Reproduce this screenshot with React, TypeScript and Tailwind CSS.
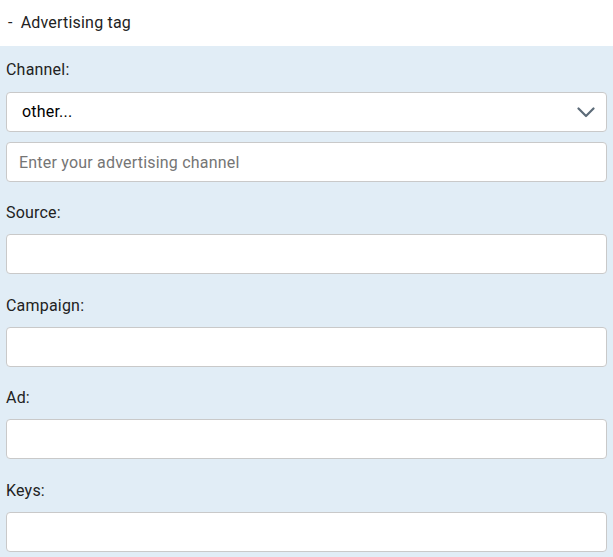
const fields = ["Source:", "Campaign:", "Ad:", "Keys:"];

function Field({ label, first }: { label: string; first?: boolean }) {
  return (
    <div className={first ? "mt-[20px]" : "mt-[20.7px]"}>
      <div className="mb-[10px] h-[22px] leading-[22px]">{label}</div>
      <input
        type="text"
        className="block h-10 w-full rounded border border-[#c9c9c9] bg-white px-3 outline-none"
      />
    </div>
  );
}

export default function App() {
  return (
    <div className="w-[613px] font-['Roboto',sans-serif] text-[16px] tracking-[0.2px] text-[#222]">
      <div className="flex h-[46px] items-center bg-white px-2">
        <span className="mr-2">-</span>
        <span>Advertising tag</span>
      </div>
      <div className="bg-[#e1edf6] px-[6px] pt-[13px] pb-[6px]">
        <div className="h-[22px] leading-[22px]">Channel:</div>
        <div className="mt-[11px] flex h-10 items-center justify-between rounded border border-[#c9c9c9] bg-white pr-[11px] pl-[15px] text-black">
          <span>other...</span>
          <svg width="18" height="11" viewBox="0 0 18 11" fill="none">
            <polyline
              points="1.5,1.5 9,9 16.5,1.5"
              stroke="#5c6b78"
              strokeWidth="2.2"
              strokeLinecap="round"
              strokeLinejoin="round"
            />
          </svg>
        </div>
        <input
          type="text"
          placeholder="Enter your advertising channel"
          className="mt-[10px] block h-10 w-full rounded border border-[#c9c9c9] bg-white px-3 outline-none placeholder:text-[#757575]"
        />
        {fields.map((f, i) => (
          <Field key={f} label={f} first={i === 0} />
        ))}
      </div>
    </div>
  );
}
